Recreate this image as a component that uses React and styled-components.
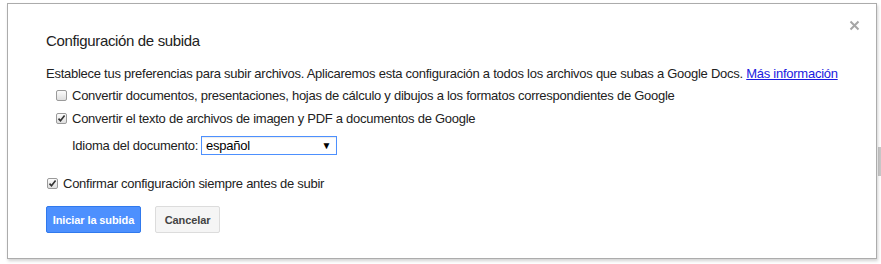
import React from "react";
import styled, { createGlobalStyle } from "styled-components";

const GlobalStyle = createGlobalStyle`
  html, body {
    margin: 0;
    padding: 0;
    background: #fff;
  }
  body {
    font-family: "Liberation Sans", Arial, sans-serif;
    color: #222;
  }
`;

const Page = styled.div`
  width: 881px;
  height: 264px;
  display: flex;
  background: #fff;
  overflow: hidden;
`;

const Dialog = styled.div`
  position: relative;
  box-sizing: border-box;
  margin: 3px 0 0 7px;
  width: 870px;
  height: 256px;
  border: 1px solid #acacac;
  background: #fff;
  box-shadow: 1px 2px 3px rgba(0, 0, 0, 0.18);
  padding: 27px 30px 0 38px;
  letter-spacing: -0.26px;
`;

const Scrollbar = styled.div`
  flex: 1;
  display: flex;
  flex-direction: column;
  padding-top: 147px;
`;

const Thumb = styled.div`
  height: 29px;
  margin-left: 1px;
  background: #c8c8c8;
`;

const Close = styled.button`
  position: absolute;
  top: 14px;
  right: 15px;
  width: 14px;
  height: 14px;
  padding: 0;
  border: 0;
  background: none;
  cursor: pointer;
  display: flex;
  align-items: center;
  justify-content: center;
`;

const Title = styled.h2`
  margin: 0;
  font-size: 15px;
  font-weight: normal;
  line-height: 20px;
  letter-spacing: -0.35px;
  color: #222;
`;

const Intro = styled.p`
  margin: 15px 0 2px 0;
  font-size: 13px;
  line-height: 16px;
  white-space: nowrap;
`;

const Link = styled.a`
  color: #1a1ae0;
  text-decoration: underline;
`;

const Option = styled.label`
  display: flex;
  align-items: center;
  gap: 5px;
  height: 23px;
  margin-left: ${(p) => p.$indent || 0}px;
  font-size: 13px;
  line-height: 16px;
  white-space: nowrap;
  cursor: default;
`;

const Box = styled.span`
  box-sizing: border-box;
  width: 11px;
  height: 11px;
  border: 1px solid #9a9a9a;
  border-radius: 2px;
  background: linear-gradient(#fcfcfc, #dedede);
  display: flex;
  align-items: center;
  justify-content: center;
  flex-shrink: 0;
`;

const LangRow = styled.div`
  display: flex;
  align-items: center;
  height: 19px;
  margin: 6px 0 0 26px;
  font-size: 13px;
  gap: 3px;
  white-space: nowrap;
`;

const Select = styled.div`
  box-sizing: border-box;
  width: 136px;
  height: 19px;
  border: 1px solid #4d90fe;
  box-shadow: inset 0 1px 1px rgba(0, 0, 0, 0.08);
  display: flex;
  align-items: center;
  justify-content: space-between;
  padding: 0 5px 0 4px;
  font-size: 13px;
  color: #000;
`;

const Arrow = styled.span`
  font-size: 10px;
  color: #000;
`;

const Spacer = styled.div`
  height: ${(p) => p.$h}px;
`;

const Buttons = styled.div`
  display: flex;
  gap: 14px;
  margin-top: 11px;
`;

const Button = styled.button`
  box-sizing: border-box;
  height: 27px;
  padding: 0;
  border: 1px solid ${(p) => (p.$primary ? "#3079ed" : "#dcdcdc")};
  border-radius: 2px;
  background: ${(p) => (p.$primary ? "#4d90fe" : "#f5f5f5")};
  color: ${(p) => (p.$primary ? "#fff" : "#444")};
  font-family: "Liberation Sans", Arial, sans-serif;
  font-size: 11px;
  font-weight: bold;
  letter-spacing: -0.1px;
  white-space: nowrap;
  width: ${(p) => (p.$primary ? 95 : 65)}px;
  cursor: pointer;
`;

const Check = ({ checked }) => (
  <Box>
    {checked && (
      <svg width="9" height="9" viewBox="0 0 9 9">
        <path
          d="M1.5 4.6 L3.5 6.8 L7.6 1.6"
          fill="none"
          stroke="#333"
          strokeWidth="1.6"
        />
      </svg>
    )}
  </Box>
);

export default function App() {
  return (
    <>
      <GlobalStyle />
      <Page>
        <Dialog>
          <Close aria-label="Cerrar">
            <svg width="11" height="11" viewBox="0 0 11 11">
              <path
                d="M1.5 1.5 L9.5 9.5 M9.5 1.5 L1.5 9.5"
                stroke="#a6a6a6"
                strokeWidth="2"
              />
            </svg>
          </Close>
          <Title>Configuración de subida</Title>
          <Intro>
            Establece tus preferencias para subir archivos. Aplicaremos esta
            configuración a todos los archivos que subas a Google Docs.{" "}
            <Link href="#">Más información</Link>
          </Intro>
          <Option $indent={10}>
            <Check />
            Convertir documentos, presentaciones, hojas de cálculo y dibujos a
            los formatos correspondientes de Google
          </Option>
          <Option $indent={10}>
            <Check checked />
            Convertir el texto de archivos de imagen y PDF a documentos de
            Google
          </Option>
          <LangRow>
            Idioma del documento:
            <Select>
              español
              <Arrow>▼</Arrow>
            </Select>
          </LangRow>
          <Spacer $h={17} />
          <Option $indent={1}>
            <Check checked />
            Confirmar configuración siempre antes de subir
          </Option>
          <Buttons>
            <Button $primary>Iniciar la subida</Button>
            <Button>Cancelar</Button>
          </Buttons>
        </Dialog>
        <Scrollbar>
          <Thumb />
        </Scrollbar>
      </Page>
    </>
  );
}
